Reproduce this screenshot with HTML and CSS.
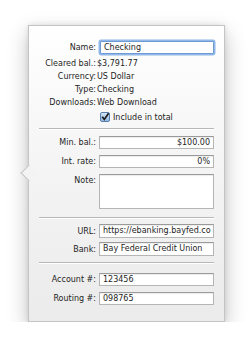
FILE: index.html
```html
<!DOCTYPE html>
<html>
<head>
<meta charset="utf-8">
<link rel="stylesheet" href="styles.css">
</head>
<body>
<div class="pop">
  <div class="sec sec1">
    <div class="row fieldrow">
      <span class="lbl">Name:</span>
      <span class="field focus">Checking</span>
    </div>
    <div class="row textrow"><span class="lbl">Cleared bal.:</span><span class="val">$3,791.77</span></div>
    <div class="row textrow"><span class="lbl">Currency:</span><span class="val">US Dollar</span></div>
    <div class="row textrow"><span class="lbl">Type:</span><span class="val">Checking</span></div>
    <div class="row textrow"><span class="lbl">Downloads:</span><span class="val">Web Download</span></div>
    <div class="row checkrow">
      <span class="lbl"></span>
      <span class="check">
        <svg width="10" height="10" viewBox="0 0 10 10">
          <defs>
            <linearGradient id="cg" x1="0" y1="0" x2="0" y2="1">
              <stop offset="0" stop-color="#d9e8f7"/>
              <stop offset="1" stop-color="#8fb6e0"/>
            </linearGradient>
          </defs>
          <rect x="0.5" y="0.5" width="9" height="9" rx="1.5" fill="url(#cg)" stroke="#5a7fae"/>
          <path d="M2.2 4.8 L4.3 7.4 L8.6 1.2" fill="none" stroke="#1b1b1b" stroke-width="1.7"/>
        </svg>
        Include in total
      </span>
    </div>
  </div>
  <div class="sep"></div>
  <div class="sec sec2">
    <div class="row fieldrow"><span class="lbl">Min. bal.:</span><span class="field num">$100.00</span></div>
    <div class="row fieldrow"><span class="lbl">Int. rate:</span><span class="field num">0%</span></div>
    <div class="row noterow"><span class="lbl">Note:</span><span class="field note"></span></div>
  </div>
  <div class="sep"></div>
  <div class="sec sec3">
    <div class="row fieldrow tall"><span class="lbl">URL:</span><span class="field">https://ebanking.bayfed.co</span></div>
    <div class="row fieldrow tall"><span class="lbl">Bank:</span><span class="field">Bay Federal Credit Union</span></div>
  </div>
  <div class="sep"></div>
  <div class="sec sec4">
    <div class="row fieldrow"><span class="lbl">Account #:</span><span class="field">123456</span></div>
    <div class="row fieldrow"><span class="lbl">Routing #:</span><span class="field">098765</span></div>
  </div>
</div>
</body>
</html>
```
FILE: styles.css
```css
html, body {
  margin: 0;
  padding: 0;
  background: #ffffff;
}
body {
  font-family: "DejaVu Sans", "Liberation Sans", sans-serif;
  font-size: 8px;
  color: #1e1e1e;
}
.pop {
  position: relative;
  box-sizing: border-box;
  margin: 25px 0 0 28px;
  width: 197px;
  height: 297px;
  border: 1px solid #c4c4c4;
  background: linear-gradient(#ffffff 0%, #f5f5f5 45%, #ebebeb 100%);
  box-shadow: 0 8px 20px rgba(0, 0, 0, 0.24), 0 0 5px rgba(0, 0, 0, 0.1);
}
.pop::before {
  content: "";
  position: absolute;
  left: -6px;
  top: 141px;
  width: 11px;
  height: 11px;
  background: #f3f3f3;
  border-left: 1px solid #c4c4c4;
  border-bottom: 1px solid #c4c4c4;
  transform: rotate(45deg);
}
.sec {
  display: flex;
  flex-direction: column;
}
.row {
  display: flex;
  align-items: center;
  gap: 3px;
}
.lbl {
  width: 67px;
  flex: none;
  text-align: right;
  white-space: nowrap;
}
.val {
  margin-left: -2px;
  white-space: nowrap;
}
.sec1 {
  padding-top: 14px;
}
.sec1 .fieldrow {
  height: 14px;
  margin-bottom: 3px;
}
.textrow {
  height: 13px;
}
.checkrow {
  height: 14px;
  margin-top: 1px;
}
.check {
  display: flex;
  align-items: center;
  gap: 3px;
  margin-left: 1px;
  white-space: nowrap;
}
.field {
  box-sizing: border-box;
  width: 115px;
  height: 13px;
  flex: none;
  background: #fff;
  border: 1px solid #b5b5b5;
  border-top-color: #9a9a9a;
  box-shadow: inset 0 1px 1px rgba(0, 0, 0, 0.08);
  padding: 0 3px;
  line-height: 11px;
  white-space: nowrap;
  overflow: hidden;
}
.field.focus {
  width: 114px;
  margin-left: 1px;
  height: 13px;
  border-color: #6e9bd4;
  box-shadow: 0 0 0 1.5px rgba(110, 160, 225, 0.75);
  border-radius: 1px;
}
.field.num {
  text-align: right;
}
.sep {
  margin: 4px 10px 0 10px;
  height: 1px;
  background: #b8b8b8;
  border-bottom: 1px solid #ffffff;
}
.sec2 {
  padding-top: 6px;
  gap: 6px;
}
.sec2 .fieldrow {
  height: 13px;
}
.noterow {
  align-items: flex-start;
}
.noterow .lbl {
  padding-top: 2px;
}
.field.note {
  height: 35px;
}
.sec2 + .sep {
  margin-top: 8px;
}
.sec3 {
  padding-top: 5px;
  gap: 4px;
}
.fieldrow.tall {
  height: 14px;
}
.fieldrow.tall .field {
  height: 14px;
  line-height: 12px;
}
.sec3 + .sep {
  margin-top: 6px;
}
.sec4 {
  padding-top: 9px;
  gap: 6px;
}
.sec4 .fieldrow {
  height: 13px;
}
```
